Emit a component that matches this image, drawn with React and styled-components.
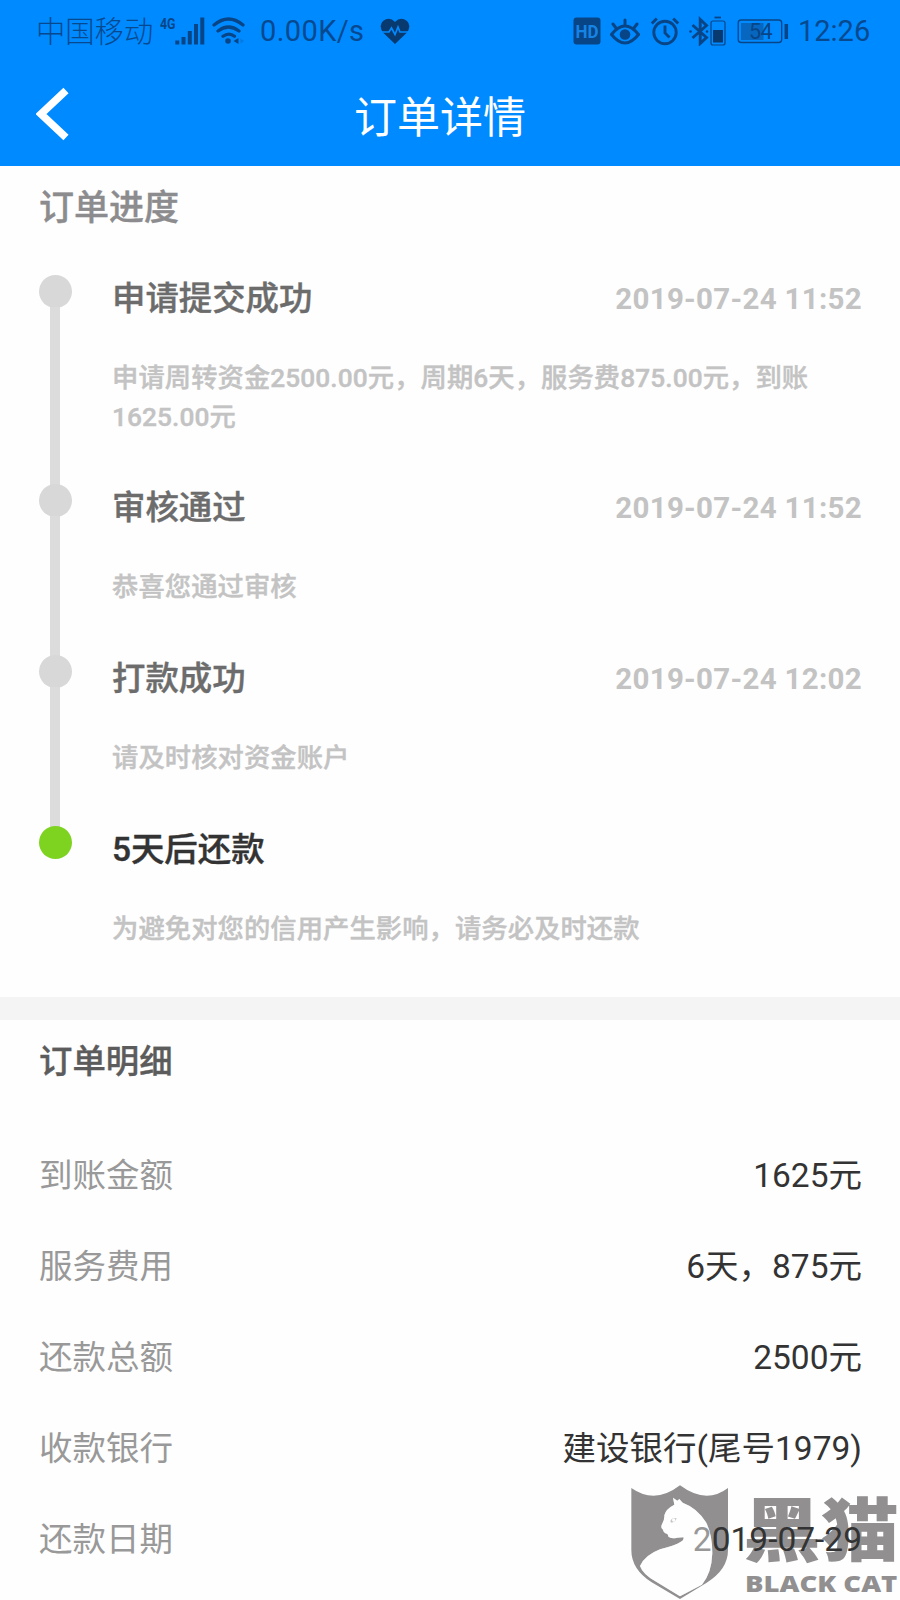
import React from 'react';
import styled, { createGlobalStyle } from 'styled-components';

const GlobalStyle = createGlobalStyle`
    * {
        box-sizing: border-box;
    }
    body {
        margin: 0;
        background: #fff;
        font-family: Roboto, 'Noto Sans CJK SC', sans-serif;
    }
`

const Page = styled.div`
    position: relative;
    width: 900px;
    height: 1600px;
    overflow: hidden;
    background: #fefefe;
`

const Header = styled.header`
    height: 166px;
    background: #008aff;
`

const StatusBar = styled.div`
    display: flex;
    align-items: center;
    justify-content: space-between;
    height: 61px;
    padding: 0 31px 0 36px;
    color: #07498f;
    font-size: 29px;
    line-height: 40px;

    svg {
        display: block;
        flex: none;
    }
`

const StatusGroup = styled.div`
    display: flex;
    align-items: center;
    gap: ${props => props.$gap || 0}px;
`

const Carrier = styled.span`
    width: 124px;
    margin-top: 3px;
    font-size: 29.3px;
    font-weight: 300;
    white-space: nowrap;
`

const Speed = styled.span`
    width: 105px;
    margin: 1px 15px 0 14px;
    letter-spacing: 0.4px;
    white-space: nowrap;
`

const Clock = styled.span`
    width: 71px;
    margin-top: 1px;
    white-space: nowrap;
`

const NavBar = styled.div`
    display: grid;
    grid-template-columns: 120px 1fr 182px;
    align-items: center;
    height: 105px;
    padding-left: 36px;
`

const NavTitle = styled.h1`
    margin: 9px 0 0 6px;
    color: #fff;
    font-size: 43px;
    font-weight: 400;
    line-height: 60px;
    text-align: center;
`

const Progress = styled.section`
    height: 831px;
    padding: 18px 38px 0 39px;
`

const SectionTitle = styled.h2`
    margin: 0;
    color: ${props => props.$color};
    font-size: ${props => props.$size}px;
    font-weight: 500;
    line-height: 50px;
    -webkit-text-stroke: 0.4px;
`

const Steps = styled.ul`
    margin: 41px 0 0;
    padding: 0;
    list-style: none;
`

const Step = styled.li`
    display: flex;
`

const Rail = styled.div`
    display: flex;
    flex-direction: column;
    align-items: center;
    width: 33px;
    margin-right: 40px;
`

const Dot = styled.span`
    flex: none;
    width: 33px;
    height: 33px;
    border-radius: 50%;
    background: ${props => (props.$active ? '#7ed321' : '#d8d8d8')};
`

const Line = styled.span`
    flex: 1;
    width: 10px;
    margin: -1px 1px -1px 0;
    background: #dcdcdc;
`

const StepBody = styled.div`
    flex: 1;
    padding: 2px 0 49.2px;
`

const StepHead = styled.div`
    display: flex;
    justify-content: space-between;
    height: 44px;
    margin-bottom: 38px;
    line-height: 44px;
`

const StepTitle = styled.span`
    color: ${props => (props.$active ? '#333' : '#6c6c6c')};
    font-size: 33.4px;
    font-weight: 500;
    -webkit-text-stroke: 0.4px;
`

const StepTime = styled.time`
    color: #c3c3c3;
    font-size: 29.5px;
    font-weight: 700;
    letter-spacing: 0.3px;
`

const StepText = styled.p`
    width: 715px;
    margin: 0 0 -1px;
    color: #c3c3c3;
    font-size: 26.3px;
    font-weight: 500;
    line-height: 38.6px;
    letter-spacing: 0.08px;
    -webkit-text-stroke: 0.4px;
`

const Divider = styled.div`
    height: 23px;
    background: #f4f4f4;
`

const Details = styled.section`
    padding: 17px 38px 0 39px;
`

const DetailList = styled.dl`
    margin: 43px 0 0;
`

const DetailRow = styled.div`
    display: flex;
    align-items: center;
    justify-content: space-between;
    height: 91.2px;
    font-size: 33.5px;
    line-height: 48px;
`

const Label = styled.dt`
    color: #999;
`

const Value = styled.dd`
    position: relative;
    z-index: 1;
    margin: 0;
    color: #333;
`

const Watermark = styled.svg`
    position: absolute;
    right: 0;
    bottom: 0;
    z-index: ${props => props.$layer};
    width: 300px;
    height: 140px;
`

const steps = [
    {
        title: '申请提交成功',
        time: '2019-07-24 11:52',
        text: '申请周转资金2500.00元，周期6天，服务费875.00元，到账1625.00元',
    },
    { title: '审核通过', time: '2019-07-24 11:52', text: '恭喜您通过审核' },
    { title: '打款成功', time: '2019-07-24 12:02', text: '请及时核对资金账户' },
    { title: '5天后还款', text: '为避免对您的信用产生影响，请务必及时还款', active: true },
];

const details = [
    { label: '到账金额', value: '1625元' },
    { label: '服务费用', value: '6天，875元' },
    { label: '还款总额', value: '2500元' },
    { label: '收款银行', value: '建设银行(尾号1979)' },
    { label: '还款日期', value: '2019-07-29' },
];

const DARK = '#084587';

const Signal = () => (
    <svg width="52" height="30" viewBox="160 15 52 30">
        <text x="160" y="28" fontSize="15.5" fontWeight="700" fill={DARK} textLength="15.5" lengthAdjust="spacingAndGlyphs">4G</text>
        <g stroke={DARK} strokeWidth="4">
            <path d="M177.300 43.500v-4M183.500 43.500v-7.500M189.800 43.500v-13.500M196 43.500v-20.500M202.300 43.500v-27" />
        </g>
    </svg>
);

const Wifi = () => (
    <svg width="34" height="30" viewBox="212 15 34 30">
        <g fill="none" stroke={DARK} strokeWidth="3.2" strokeLinecap="round">
            <path d="M214 24q14.500-12 29 0M218 30q10.500-8 21 0M223 35.300q6-4.500 11.500 0" />
        </g>
        <circle cx="228" cy="40" r="2.800" fill={DARK} />
        <path d="M238.500 37v6l-5-3z" fill={DARK} />
        <path d="M240.500 37.500l3.500 2.500-3.500 2.500z" fill={DARK} opacity="0.25" />
    </svg>
);

const Heart = () => (
    <svg width="30" height="28" viewBox="380 16 30 28">
        <path d="M395 43L383.500 32Q378 25 383 20Q389.500 15 395 21Q400.500 15 407 20Q412 25 406.500 32Z" fill="#08396f" />
        <path d="M380 31h9l2.500-4 3.500 6.500 3-7.500 2 5h9" fill="none" stroke="#008aff" strokeWidth="1.700" />
    </svg>
);

const Hd = () => (
    <svg width="28" height="28" viewBox="0 0 28 28">
        <rect x="0.500" y="0.500" width="27" height="27" rx="3" fill={DARK} />
        <text x="2.500" y="20.500" fontSize="18.500" fontWeight="700" fill="#1684e4" textLength="23" lengthAdjust="spacingAndGlyphs">HD</text>
    </svg>
);

const Eye = () => (
    <svg width="30" height="30" viewBox="609 15 30 30">
        <g fill="none" stroke={DARK} strokeWidth="3" strokeLinecap="round">
            <path d="M610.500 33.500q13.500-17 27 0q-13.500 17-27 0zM624 24v-5M615 27l-3-4M633 27l3-4" />
        </g>
        <circle cx="624" cy="33.500" r="5.300" fill={DARK} />
    </svg>
);

const Alarm = () => (
    <svg width="30" height="30" viewBox="648 15 30 30">
        <g fill="none" stroke={DARK} strokeWidth="2.900">
            <circle cx="663" cy="31.500" r="11.200" />
            <path d="M663 24.500v7.500l4.500 4.500M649.800 22.500l5-5M676.200 22.500l-5-5" />
        </g>
    </svg>
);

const Bluetooth = () => (
    <svg width="38" height="30" viewBox="687 15 38 30">
        <path d="M690.500 24l14 12.500-6.300 6V18.500l6.300 6-14 12.500" fill="none" stroke={DARK} strokeWidth="2.900" />
        <circle cx="688.500" cy="30.500" r="1.300" fill={DARK} />
        <circle cx="705" cy="30.500" r="1.300" fill={DARK} />
        <rect x="709" y="20" width="14" height="24" rx="2" fill="none" stroke={DARK} strokeWidth="1.200" />
        <path d="M712.500 16.500h6.500" stroke={DARK} strokeWidth="1.800" />
        <path d="M711 29h10v12.500h-10z" fill="#08396f" />
    </svg>
);

const Battery = () => (
    <svg width="52" height="30" viewBox="736 15 52 30">
        <rect x="737.200" y="19" width="43.500" height="22.500" rx="3" fill="none" stroke={DARK} strokeWidth="1.300" />
        <rect x="740" y="22" width="22.500" height="17" fill="#0767c0" />
        <path d="M785.300 23v15" stroke={DARK} strokeWidth="3.500" />
        <text x="748" y="37.800" fontSize="21.500" fill={DARK} textLength="23.500">54</text>
    </svg>
);

const BackIcon = () => (
    <svg width="33" height="54" viewBox="0 0 33 54">
        <path d="M30 3.500L5 27L30 50.500" fill="none" stroke="#fff" strokeWidth="7.500" />
    </svg>
);

// shared by the shield and by the veil that fades the text under the cat
const CAT = 'M219 113L232 122L238 117L248 128Q292 144 318 187Q337 222 337 280Q335 340 306 374L240 409L166 364Q128 342 120 318Q135 285 180 268Q228 256 240 247Q254 240 250 232L232 233Q212 238 204 229Q206 222 196 220Q190 216 188 208Q181 203 186 193Q194 180 193 166Q197 147 223 134Z';

const BlackCat = () => (
    <Watermark $layer={0} viewBox="0 0 900 420">
        <path d="M94 84Q165 134 240 76Q318 134 384 84V270Q384 328 320 368L240 417L155 367Q94 328 94 270Z" fill="#918f90" />
        <path d={CAT} fill="#fefefe" />
        <path d="M211 184Q216 171 230 175Q225 188 214 188Z" fill="#918f90" />
        <circle cx="221" cy="180" r="5" fill="#fefefe" />
        <text x="429" y="287" fontFamily="'Noto Sans CJK SC', sans-serif" fontSize="208" fontWeight="900" fill="#918f90" textLength="468" lengthAdjust="spacingAndGlyphs">黑猫</text>
        <text x="435" y="397" fontFamily="'Open Sans', sans-serif" fontSize="67" fontWeight="800" fill="#918f90" textLength="457" lengthAdjust="spacingAndGlyphs">BLACK CAT</text>
    </Watermark>
);

const App = () => {
    return (
        <Page>
            <GlobalStyle />
            <Header>
                <StatusBar>
                    <StatusGroup>
                        <Carrier>中国移动</Carrier>
                        <Signal />
                        <Wifi />
                        <Speed>0.00K/s</Speed>
                        <Heart />
                    </StatusGroup>
                    <StatusGroup $gap={9.5}>
                        <Hd />
                        <Eye />
                        <Alarm />
                        <Bluetooth />
                        <Battery />
                        <Clock>12:26</Clock>
                    </StatusGroup>
                </StatusBar>
                <NavBar>
                    <BackIcon />
                    <NavTitle>订单详情</NavTitle>
                </NavBar>
            </Header>
            <Progress>
                <SectionTitle $color="#8c8c8e" $size={35}>订单进度</SectionTitle>
                <Steps>
                    {
                        steps.map((s, id) => {
                            return (
                                <Step key={id}>
                                    <Rail>
                                        <Dot $active={s.active} />
                                        {id < steps.length - 1 && <Line />}
                                    </Rail>
                                    <StepBody>
                                        <StepHead>
                                            <StepTitle $active={s.active}>{s.title}</StepTitle>
                                            {s.time && <StepTime>{s.time}</StepTime>}
                                        </StepHead>
                                        <StepText>{s.text}</StepText>
                                    </StepBody>
                                </Step>
                            )
                        })
                    }
                </Steps>
            </Progress>
            <Divider />
            <Details>
                <SectionTitle $color="#5c5c5c" $size={33.4}>订单明细</SectionTitle>
                <DetailList>
                    {
                        details.map((d, id) => {
                            return (
                                <DetailRow key={id}>
                                    <Label>{d.label}</Label>
                                    <Value>{d.value}</Value>
                                </DetailRow>
                            )
                        })
                    }
                </DetailList>
            </Details>
            <BlackCat />
            <Watermark $layer={2} viewBox="0 0 900 420">
                <path d={CAT} fill="#fefefe" opacity="0.5" />
            </Watermark>
        </Page>
    );
};

export default App;
